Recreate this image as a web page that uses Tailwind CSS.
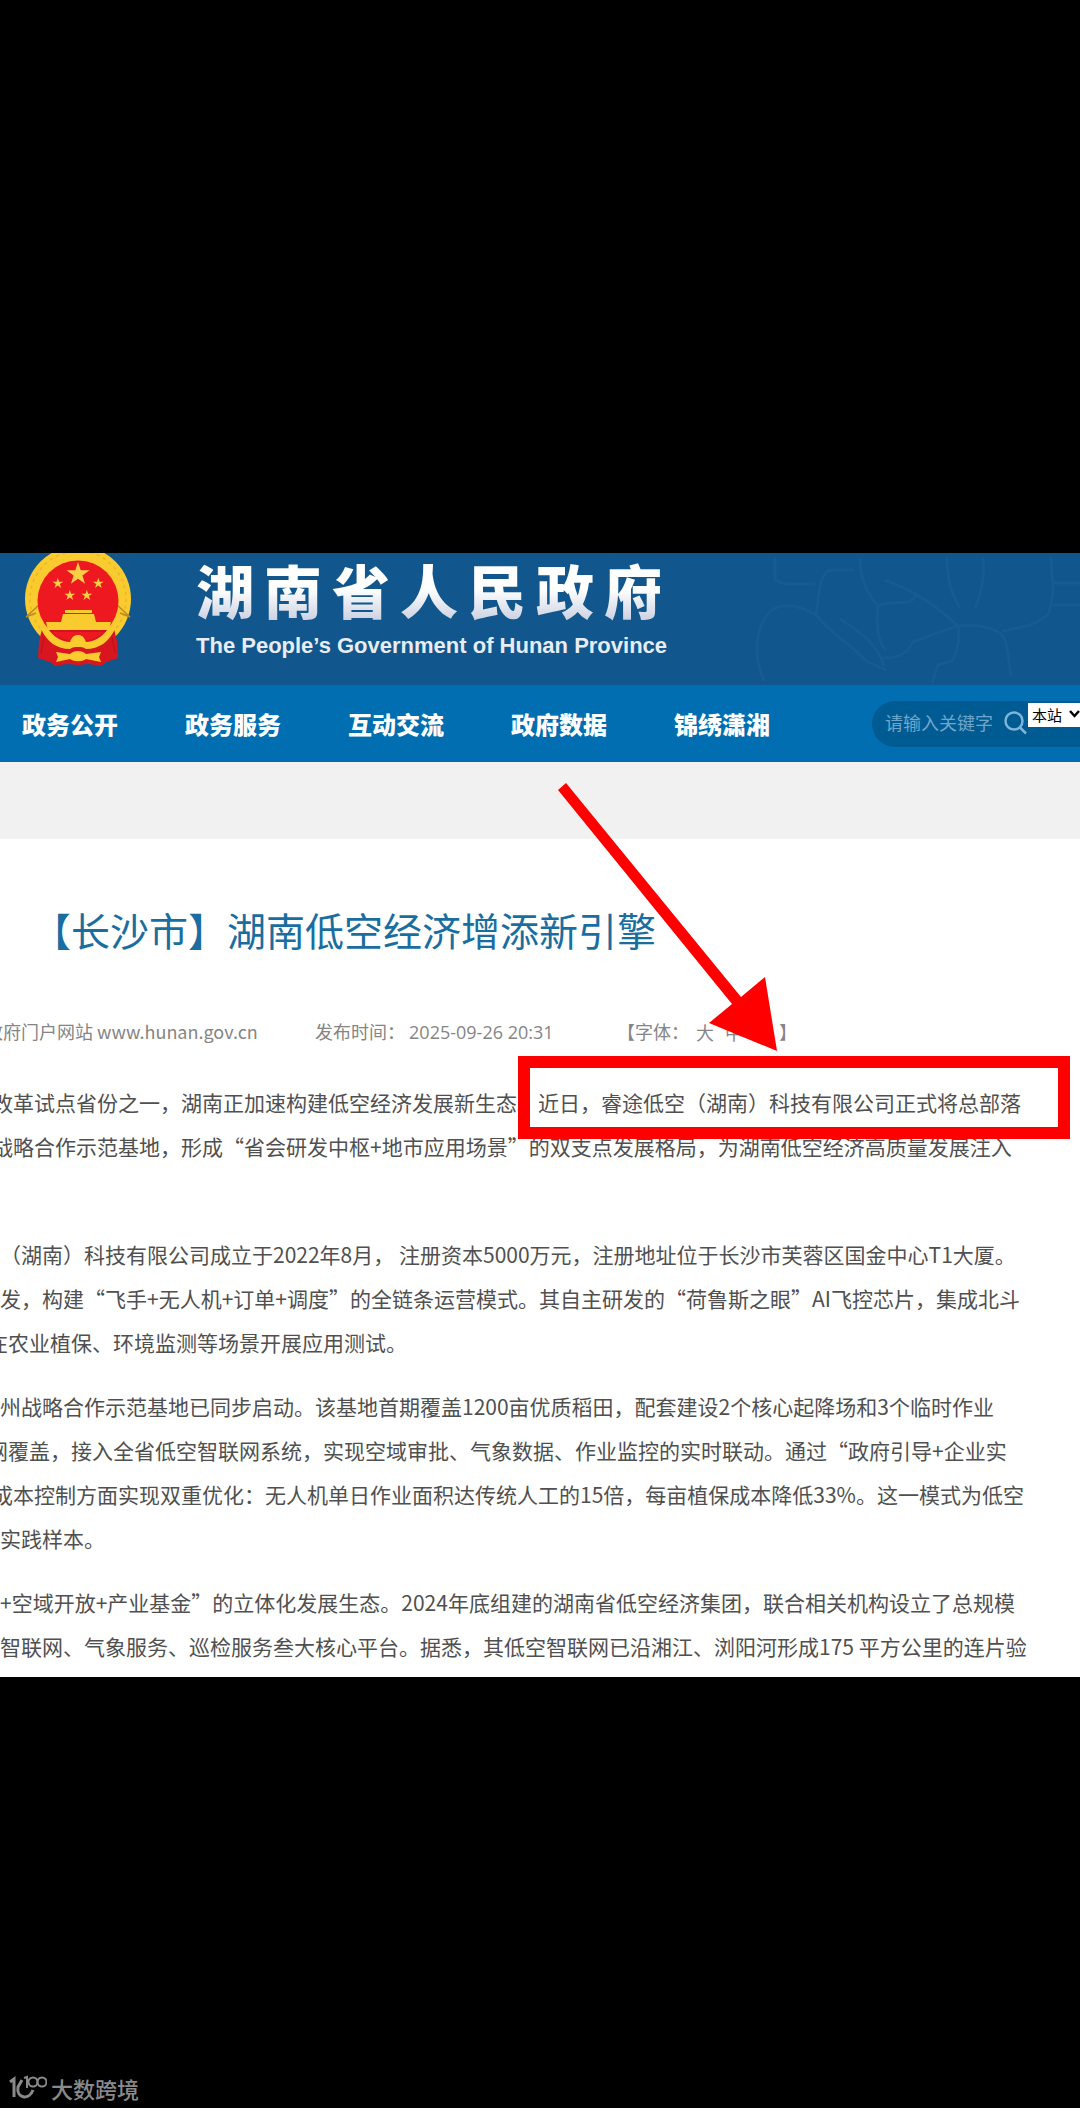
<!DOCTYPE html>
<html lang="zh-CN">
 <head>
  <meta charset="utf-8"/>
  <meta content="width=device-width, initial-scale=1" name="viewport"/>
  <title>湖南省人民政府</title>
  <script src="https://cdn.jsdelivr.net/npm/@tailwindcss/browser@4"></script>
  <style>
   body {
      font-family: 'Noto Sans CJK SC', sans-serif;
    }
  </style>
 </head>
 <body class="bg-black min-h-screen flex flex-col overflow-x-hidden">
  <main class="relative mt-[553px] bg-white overflow-hidden">
   <!-- Banner -->
   <header class="relative h-[132px] bg-[#11568c] flex items-start overflow-hidden">
    <!-- Hibiscus line pattern -->
    <svg class="absolute right-0 top-0 w-[340px] h-[132px]" viewBox="0 0 340 132" fill="none" stroke="#2a6fa5" stroke-opacity=".22" stroke-width="3">
     <path d="M24 128C12 100 16 75 30 58c15-10 32-4 46 4M35 5v22l10 4h30M76 62c4-24 2-38 14-45h24M120 5c0 20 6 34 18 48M76 62c14 18 36 30 50 46l20 9M100 66c20 12 40 28 44 48M138 53c-2 20 0 36 8 44M138 53c20-8 30 2 38-10M145 27c15 6 40 15 73 46M207 5c0 20 5 38 13 50M243 5c2 18-2 36-8 50M218 73c-15 5-30 10-45 16-5 12-15 16-30 16M218 73c2 15 0 25-6 35l-14 4-6 18M218 73c15-2 35 0 45 10 6 10 6 30 8 40M263 78c20-4 35-6 46-18l4-20-2-36M312 30h28M312 52h28"/>
    </svg>
    <!-- National emblem -->
    <svg class="w-[112px] h-[116px] ml-[22px] shrink-0" viewBox="0 0 112 116">
     <circle cx="56" cy="46" r="53" fill="#f9cb2f"/>
     <circle cx="56" cy="46" r="48" fill="none" stroke="#eab52a" stroke-width="1.5" stroke-dasharray="3 4"/>
     <path d="M14 60L4 64M4 64l14-13M98 60l10 4-14-13" fill="none" stroke="#b98a25" stroke-width="1.5"/>
     <path d="M20 76l-3 12-1 17 12 4 5 4 12-2 11 1 11-1 12 2 5-4 12-4-1-17-3-12z" fill="#d9161f"/>
     <circle cx="56" cy="48" r="40.500" fill="#ee1820"/>
     <g fill="#f9cf45">
      <path id="star" d="M56 9l2.700 8.300h8.800l-7.100 5.200 2.700 8.300-7.100-5.100-7.100 5.100 2.700-8.300-7.100-5.200h8.800z"/>
      <use href="#star" transform="translate(9.500 20.500) scale(.47)"/>
      <use href="#star" transform="translate(50 20.500) scale(.47)"/>
      <use href="#star" transform="translate(21.500 32.500) scale(.47)"/>
      <use href="#star" transform="translate(38.500 32.500) scale(.47)"/>
     </g>
     <g fill="#f9cb2f">
      <path d="M43 57h27v3H43zM41 61h31l2 8H39zM24 69h65l-2 8H26z"/>
      <path d="M19 76h7c6 8 14 13 22 13 2-6 5-7 8-7s6 1 8 7c8 0 16-5 22-13h7c-6 13-16 20-29 20-3-2-5-2-8-2s-5 0-8 2c-13 0-23-7-29-20z"/>
      <path d="M34 99l14 2c4-4 12-4 16 0l15-2-2 5 2 5-15-3c-4 3-12 3-16 0l-14 3 2-5z"/>
     </g>
     <path d="M28 78h56M22 84l-3 16M90 84l3 16" fill="none" stroke="#b3121a" stroke-width="1"/>
    </svg>
    <div class="ml-[62px]">
     <h1 class="text-[58px] leading-[72px] font-black tracking-[10px] bg-linear-to-b from-white from-50% to-[#c3cbdd] bg-clip-text text-transparent">湖南省人民政府</h1>
     <p class="text-[22px] leading-[42px] font-bold text-[#e8edf5] font-['Liberation_Sans',sans-serif]">The People’s Government of Hunan Province</p>
    </div>
   </header>
   <!-- Navigation -->
   <nav class="h-[77px] bg-[#006eb0] flex items-center">
    <div class="flex gap-[67px] pl-[22px] text-2xl font-black text-white whitespace-nowrap">
     <a href="#">政务公开</a>
     <a href="#">政务服务</a>
     <a href="#">互动交流</a>
     <a href="#">政府数据</a>
     <a href="#">锦绣潇湘</a>
    </div>
    <form class="ml-auto w-[208px] h-[46px] bg-[#005b92] rounded-l-full flex items-center pl-[13px]">
     <input aria-label="搜索" class="w-[118px] pb-1 text-lg text-white placeholder:text-[#6fa6cb] outline-none bg-transparent" placeholder="请输入关键字" type="text"/>
     <button aria-label="提交搜索" class="w-[25px] h-[25px] shrink-0" type="button">
      <svg class="w-full h-full" viewBox="0 0 25 25" fill="none" stroke="#7db4d8" stroke-width="2.500"><circle cx="11" cy="10" r="8.500"/><path d="M17 16.500l6 6"/></svg>
     </button>
     <div class="relative self-start mt-px w-[60px] shrink-0">
      <select aria-label="搜索范围" class="appearance-none w-full h-6 pl-1 bg-white text-black text-[15px] leading-6"><option>本站</option></select>
      <svg class="absolute left-[41px] top-2 w-[11px] h-2" viewBox="0 0 11 8" fill="none" stroke="#000" stroke-width="2.500"><path d="M1 1l4.500 5L10 1"/></svg>
     </div>
    </form>
   </nav>
   <div class="h-[77px] bg-[#f1f1f1]"></div>
   <!-- Article -->
   <article class="whitespace-nowrap pt-[61px] pb-[9px]">
    <h2 class="pl-8 text-[39px] leading-[58px] text-[#1a6e9f]">【长沙市】湖南低空经济增添新引擎</h2>
    <div class="flex mt-[57px] text-lg leading-8 text-[#858585]">
     <span class="-ml-[15px] w-[330px]">政府门户网站 www.hunan.gov.cn</span>
     <span class="w-[302px]">发布时间： <time class="font-['Open_Sans',sans-serif]">2025-09-26 20:31</time></span>
     <div class="flex gap-[11px]">
      <span>【字体：</span>
      <button class="-ml-1" type="button">大</button>
      <button type="button">中</button>
      <button type="button">小</button>
      <span class="-ml-1">】</span>
     </div>
    </div>
    <div class="mt-8 -ml-[29px] text-[21px] leading-[44px] text-[#505050]">
     <p class="mb-16">
      地改革试点省份之一，湖南正加速构建低空经济发展新生态。近日，睿途低空（湖南）科技有限公司正式将总部落<br/>
      州战略合作示范基地，形成“省会研发中枢+地市应用场景”的双支点发展格局，为湖南低空经济高质量发展注入
     </p>
     <p class="mb-5">
      <span class="pl-2">空（湖南）科技有限公司成立于2022年8月， 注册资本5000万元，注册地址位于长沙市芙蓉区国金中心T1大厦。</span><br/>
      <span class="pl-2">研发，构建“飞手+无人机+订单+调度”的全链条运营模式。其自主研发的“荷鲁斯之眼”AI飞控芯片，集成北斗</span><br/>
      <span class="pl-4">在农业植保、环境监测等场景开展应用测试。</span>
     </p>
     <p class="mb-5">
      <span class="pl-2">永州战略合作示范基地已同步启动。该基地首期覆盖1200亩优质稻田，配套建设2个核心起降场和3个临时作业</span><br/>
      <span class="pl-4">网覆盖，接入全省低空智联网系统，实现空域审批、气象数据、作业监控的实时联动。通过“政府引导+企业实</span><br/>
      与成本控制方面实现双重优化：无人机单日作业面积达传统人工的15倍，每亩植保成本降低33%。这一模式为低空<br/>
      <span class="pl-2">的实践样本。</span>
     </p>
     <p>
      <span class="pl-2">策+空域开放+产业基金”的立体化发展生态。2024年底组建的湖南省低空经济集团，联合相关机构设立了总规模</span><br/>
      <span class="pl-2">空智联网、气象服务、巡检服务叁大核心平台。据悉，其低空智联网已沿湘江、浏阳河形成175 平方公里的连片验</span>
     </p>
    </div>
   </article>
   <!-- Red highlight -->
   <div class="absolute left-[518px] top-[503px] w-[552px] h-[83px] border-[12px] border-[#fe0000]"></div>
   <svg class="absolute left-[550px] top-[225px] w-[240px] h-[280px]" viewBox="0 0 240 280">
    <path d="M16 5L191 219L215 199L227 273L159 245L182 226L8 12z" fill="#fe0000"/>
   </svg>
  </main>
  <footer class="mt-auto flex items-center gap-1 h-10 pl-[9px] text-[#8a8a8a]">
   <svg class="w-[38px] h-[26px]" viewBox="0 0 38 26" fill="none" stroke="#8a8a8a">
    <path d="M1 7l4-3v18M13 5l-4 7c-2 11 11 14 15 3" stroke-width="3"/>
    <path d="M15 3l3-1v11" stroke-width="2"/>
    <circle cx="24" cy="7" r="4.500" stroke-width="2"/>
    <circle cx="33" cy="7" r="4.500" stroke-width="2"/>
   </svg>
   <span class="text-[22px] font-medium">大数跨境</span>
  </footer>
 </body>
</html>
